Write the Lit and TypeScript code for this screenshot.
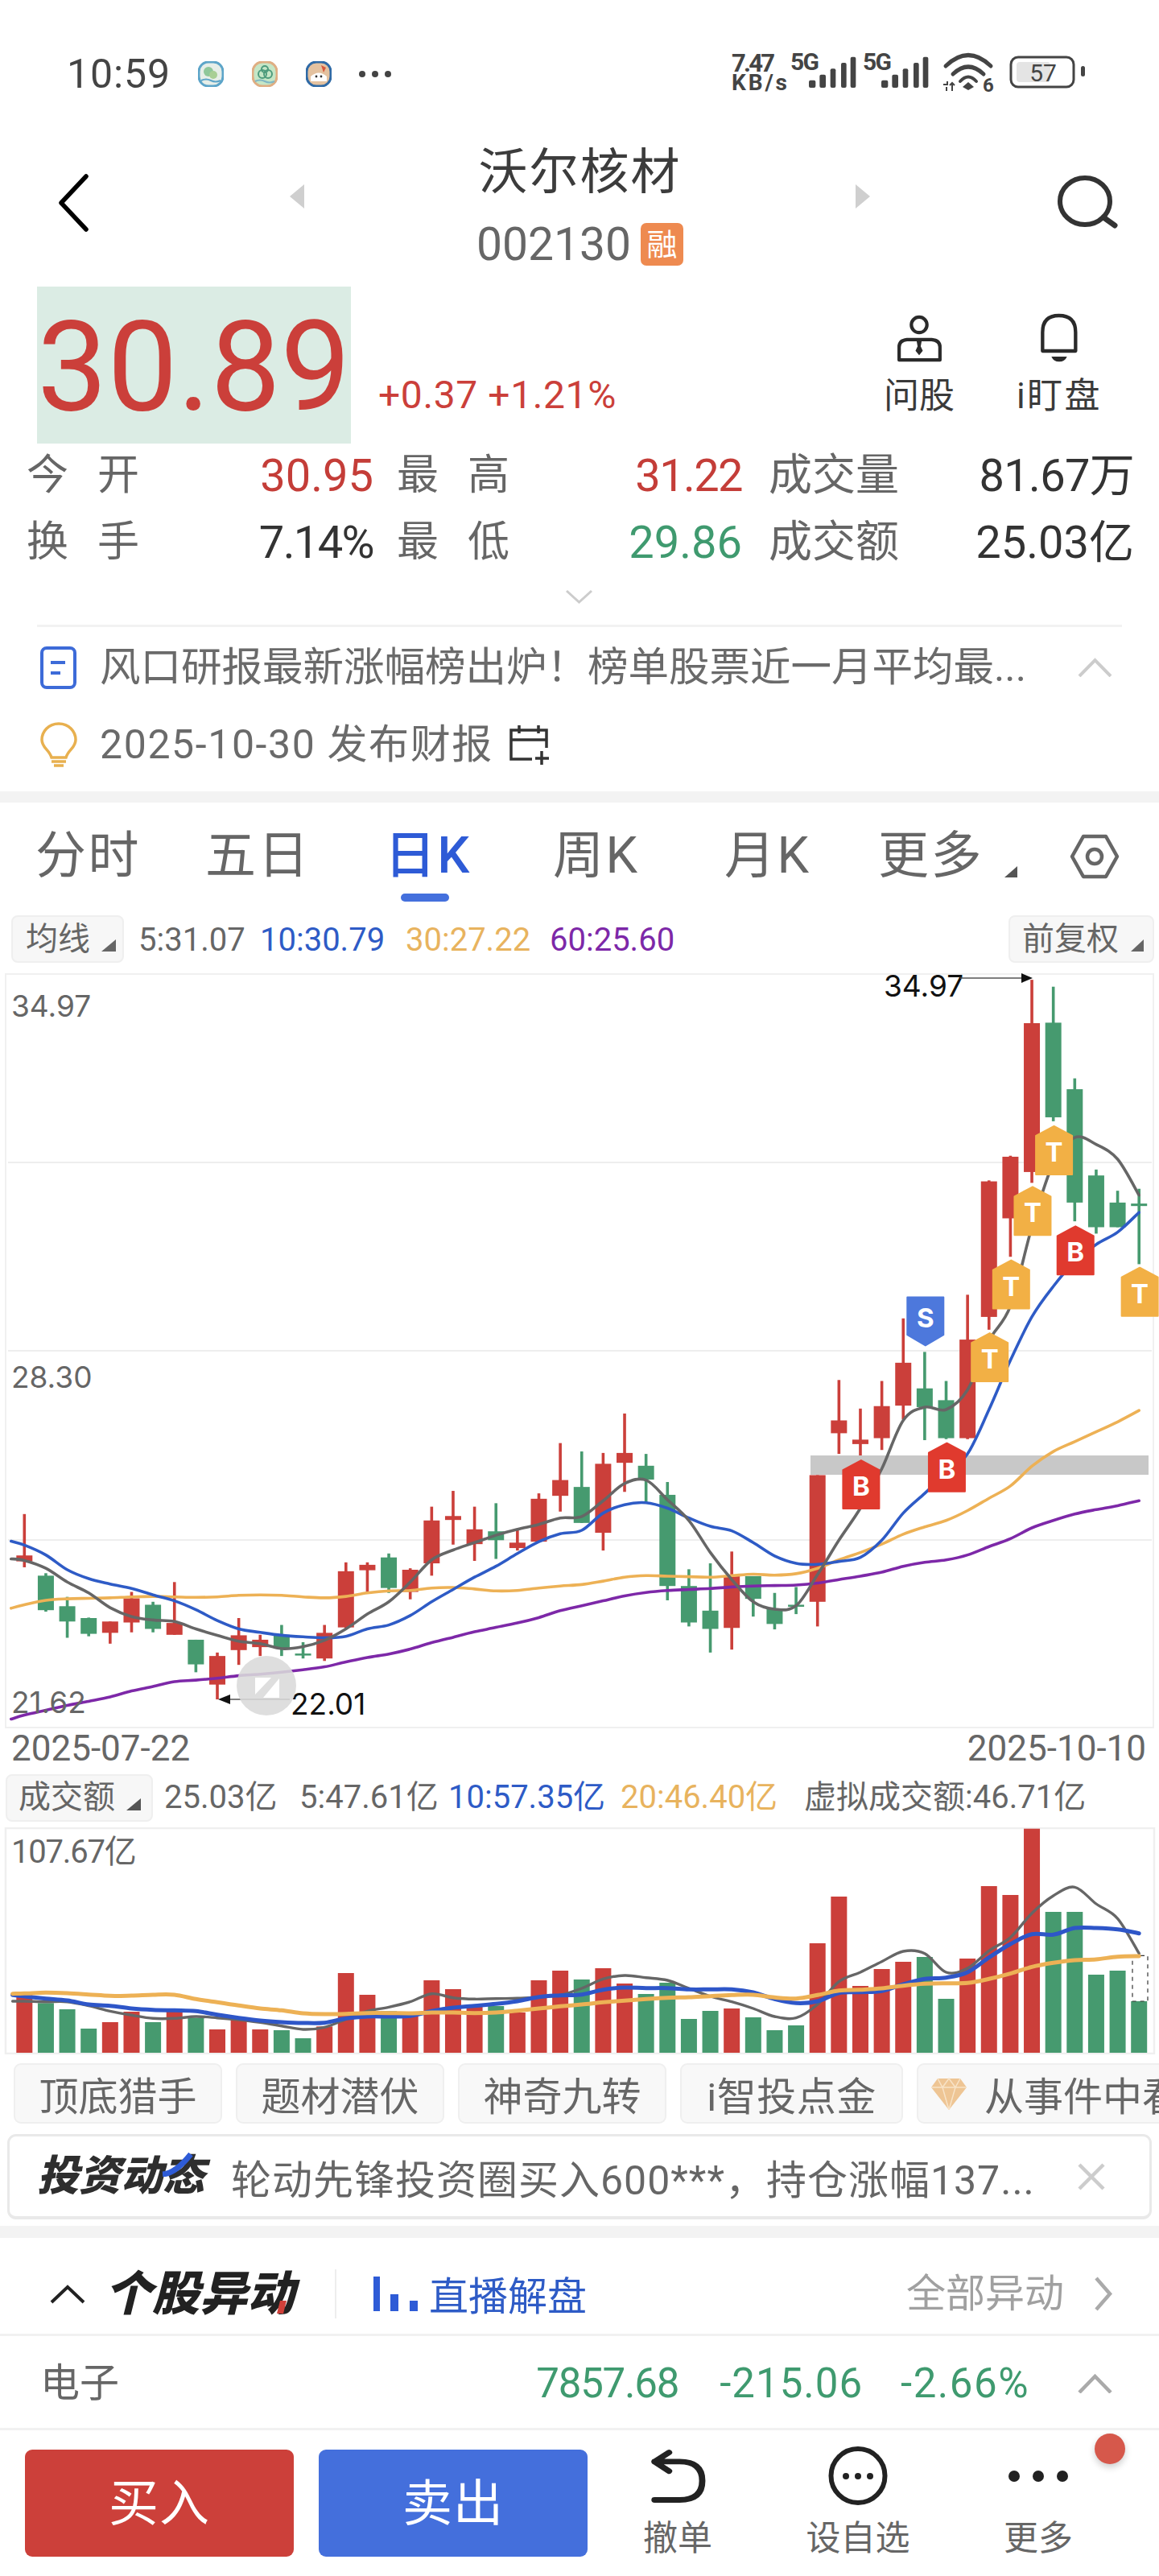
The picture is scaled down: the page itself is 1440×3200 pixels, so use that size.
import { LitElement, html, css, svg } from "lit";
import { customElement } from "lit/decorators.js";

const RED = "#cb3f3a";
const GREEN = "#469a6f";
const Z = 1568 / 720;
const STEP = 58 / Z;
const cx = (i: number) => 66 / Z + i * STEP;
const py = (z: number) => 1200 + (z * 960) / 1568;

// [isRed, wickTop, bodyTop, bodyBottom, wickBottom] in crop units
const candles: number[][] = [
  [1,1112,1196,1208,1220],[0,1232,1237,1307,1310],[0,1280,1299,1330,1363],[0,1322,1323,1355,1360],
  [1,1330,1330,1353,1375],[1,1270,1283,1332,1352],[0,1290,1296,1345,1352],[1,1250,1333,1357,1357],
  [0,1367,1367,1417,1433],[1,1393,1400,1458,1488],[1,1323,1358,1388,1418],[1,1357,1367,1382,1400],
  [0,1337,1357,1385,1400],[0,1372,1395,1399,1405],[1,1337,1353,1405,1410],[1,1210,1228,1342,1345],
  [1,1210,1215,1226,1270],[0,1192,1200,1262,1272],[1,1222,1225,1270,1285],[1,1097,1125,1212,1237],
  [1,1065,1116,1124,1174],[1,1097,1143,1173,1207],[0,1090,1147,1165,1203],[1,1142,1170,1181,1186],
  [1,1070,1081,1168,1168],[1,968,1043,1075,1107],[0,985,1057,1130,1130],[1,988,1010,1150,1186],
  [1,908,988,1008,1067],[0,990,1014,1042,1090],[0,1047,1073,1258,1287],[0,1224,1258,1332,1340],
  [0,1212,1308,1345,1393],[1,1188,1238,1343,1387],[0,1238,1238,1284,1320],[0,1272,1305,1335,1346],
  [0,1260,1296,1300,1315],[1,1033,1033,1290,1340],[1,840,922,948,990],[1,898,961,970,1000],
  [1,842,893,958,982],[1,715,805,892,920],[0,783,857,895,962],[0,842,881,958,960],
  [1,667,758,958,960],[1,435,437,712,738],[1,385,387,512,590],[1,28,116,418,440],
  [0,42,115,307,315],[0,228,250,480,518],[0,413,425,530,543],[0,456,480,530,530],[0,452,482,487,605],
];

const ma5 = [1203,1206,1222,1250,1272,1302,1320,1327,1330,1345,1358,1370,1375,1385,1381,1368,1345,1315,1290,1250,1205,1185,1170,1155,1143,1133,1120,1117,1085,1050,1043,1083,1125,1190,1245,1290,1305,1298,1235,1165,1100,1020,922,895,900,860,760,690,530,400,348,362,392,465];
const ma10 = [1167,1175,1195,1225,1243,1254,1263,1276,1288,1306,1328,1345,1352,1358,1361,1363,1360,1345,1337,1318,1290,1265,1240,1218,1192,1168,1152,1145,1110,1093,1089,1100,1120,1137,1146,1170,1197,1212,1214,1208,1200,1165,1110,1070,1030,990,900,800,712,650,600,565,540,500];
const ma30 = [1303,1296,1287,1284,1283,1282,1280,1279,1280,1281,1280,1277,1276,1277,1280,1282,1279,1272,1268,1267,1262,1261,1264,1268,1267,1262,1258,1255,1248,1240,1237,1238,1239,1240,1237,1234,1236,1233,1222,1205,1190,1173,1153,1138,1125,1105,1080,1055,1015,985,965,945,925,902];
const ma60 = [1528,1520,1510,1500,1492,1483,1471,1462,1452,1449,1445,1440,1437,1433,1428,1422,1412,1403,1396,1386,1373,1362,1351,1342,1333,1322,1308,1298,1288,1278,1271,1267,1265,1263,1260,1258,1257,1256,1252,1245,1238,1230,1218,1210,1205,1195,1178,1162,1140,1125,1112,1103,1095,1085];

// volume: [isRed, top] in crop units
const vols: number[][] = [
  [1,895],[0,925],[0,948],[0,1020],[1,996],[1,957],[0,996],[1,957],[0,980],[1,1023],[1,985],[1,1023],[0,1026],[0,1056],
  [1,1012],[1,813],[1,894],[0,955],[1,972],[1,840],[1,873],[1,935],[0,936],[1,960],[1,840],[1,804],[0,837],[1,795],
  [1,852],[0,891],[0,849],[0,984],[0,954],[1,945],[0,978],[0,1026],[0,1008],[1,702],[1,528],[1,861],[1,798],[1,771],
  [0,753],[0,909],[1,759],[1,489],[1,522],[1,275],[0,585],[0,585],[0,819],[0,804],[0,918],
];
const vGray = [918,918,920,920,935,955,970,982,982,975,980,987,997,1010,1023,1015,985,955,940,920,890,905,910,908,907,902,895,870,835,822,830,840,870,900,920,945,975,980,930,845,810,770,732,740,810,795,730,680,590,525,493,555,610,740];
const vBlue = [895,900,908,915,930,935,945,950,952,955,968,980,990,996,999,998,982,975,975,973,955,942,935,928,918,902,896,893,875,867,869,869,874,874,874,885,910,925,918,887,884,880,855,835,830,810,755,705,668,670,645,645,650,665];
const vOrange = [890,889,886,888,893,898,897,894,894,910,922,934,945,952,963,966,965,962,962,963,960,960,962,960,953,945,937,930,922,916,910,905,903,899,895,894,904,908,895,878,875,870,860,853,851,850,835,815,790,775,765,762,752,750];
const vy = (z: number) => 2180 + z / 3;

function smooth(pts: number[][]): string {
  let d = `M${pts[0][0].toFixed(1)} ${pts[0][1].toFixed(1)}`;
  for (let i = 0; i < pts.length - 1; i++) {
    const p0 = pts[Math.max(0, i - 1)];
    const p1 = pts[i];
    const p2 = pts[i + 1];
    const p3 = pts[Math.min(pts.length - 1, i + 2)];
    const c1x = p1[0] + (p2[0] - p0[0]) / 6;
    const c1y = p1[1] + (p2[1] - p0[1]) / 6;
    const c2x = p2[0] - (p3[0] - p1[0]) / 6;
    const c2y = p2[1] - (p3[1] - p1[1]) / 6;
    d += ` C${c1x.toFixed(1)} ${c1y.toFixed(1)} ${c2x.toFixed(1)} ${c2y.toFixed(1)} ${p2[0].toFixed(1)} ${p2[1].toFixed(1)}`;
  }
  return d;
}
const priceLine = (a: number[]) =>
  smooth(a.map((v, i) => [i === 0 ? 13.8 : cx(i - 1), py(v)]));
const volLine = (a: number[]) =>
  smooth(a.map((v, i) => [i === 0 ? 15.6 : cx(i - 1), vy(v)]));

function marker(zx: number, zTop: number, label: string, fill: string, down = false) {
  const x = 720 + zx / Z;
  const top = py(zTop);
  const w = 45;
  const h = 60;
  const l = x - w / 2;
  const r = x + w / 2;
  const pts = down
    ? `${l},${top} ${r},${top} ${r},${top + h * 0.78} ${x},${top + h} ${l},${top + h * 0.78}`
    : `${x},${top} ${r},${top + h * 0.2} ${r},${top + h} ${l},${top + h} ${l},${top + h * 0.2}`;
  return svg`<polygon points=${pts} fill=${fill} stroke=${fill} stroke-width="2" stroke-linejoin="round"/>
    <text x=${x} y=${top + (down ? 38 : 44)} text-anchor="middle" class="mk">${label}</text>`;
}

@customElement("app-root")
export class AppRoot extends LitElement {
  static styles = css`
    :host {
      display: block;
      width: 1440px;
      height: 3200px;
      overflow: hidden;
      background: #fff;
      font-family: Roboto, "Noto Sans CJK SC", sans-serif;
      color: #666;
    }
    svg { display: block; }
    .status { height: 184px; display: flex; align-items: center; padding-left: 83px; color: #444; }
    .time { font-size: 50px; width: 163px; letter-spacing: 0.9px; }
    .appicon { width: 32px; height: 32px; margin-right: 35px; }
    .sdots { width: 42px; height: 10px; margin-left: -2px; }
    .sright { margin-left: auto; margin-right: 60px; }
    .sright text { font-family: Roboto, sans-serif; fill: #444; }
    .nav { height: 172px; display: grid; grid-template-columns: 360px 18px 1fr 18px 359px; align-items: start; color: #444; }
    .back { margin: 32px 0 0 72px; }
    .tri { margin-top: 45px; }
    .search { margin: 34px 0 0 232px; }
    .head { display: flex; flex-direction: column; align-items: center; }
    .title { font-size: 61px; line-height: 60px; letter-spacing: 2px; color: #3c3c3c; }
    .coderow { display: flex; align-items: center; margin-top: 33px; height: 53px; }
    .code { font-size: 57px; color: #666; line-height: 53px; }
    .badge { margin-left: 12px; width: 53px; height: 53px; background: #ee8a50; color: #fff; border-radius: 7px; font-size: 38px; display: flex; align-items: center; justify-content: center; line-height: 1; }
    .quote { height: 195px; display: flex; align-items: flex-end; }
    .pricebox { margin-left: 46px; width: 390px; height: 195px; background: #dbece4; color: #cb3f3a; font-size: 155px; line-height: 200px; text-align: center; box-sizing: border-box; white-space: nowrap; }
    .chg { margin: 0 0 35px 34px; font-size: 48px; line-height: 50px; color: #cb3f3a; letter-spacing: 0.6px; white-space: nowrap; }
    .acts { margin-left: auto; margin-right: 37px; display: flex; align-self: flex-start; }
    .act { width: 174px; display: flex; flex-direction: column; align-items: center; padding-top: 33px; color: #3a3a3a; font-size: 44px; line-height: 48px; }
    .act svg { height: 62px; margin-bottom: 17px; }
    .act .sp { letter-spacing: 2.5px; }
    .stats { margin-top: 8px; display: flex; flex-direction: column; gap: 19px; }
    .srow { height: 64px; display: flex; font-size: 56px; line-height: 64px; }
    .cell { display: flex; justify-content: space-between; white-space: nowrap; }
    .c1 { margin-left: 33px; width: 431px; }
    .c2 { margin-left: 29px; width: 429px; }
    .c3 { margin-left: 33px; width: 454px; }
    .lab { font-size: 54px; color: #666; }
    .lab2 { font-size: 52px; color: #666; width: 140px; display: flex; justify-content: space-between; }
    .r { color: #c43d38; }
    .g { color: #3f9a6f; }
    .k { color: #333; }
    .nar { letter-spacing: -1.6px; }
    .nar2 { letter-spacing: -0.7px; }
    .more { margin: 26px 0 0 702px; }
    .rule { margin: 26px 46px 0; height: 3px; background: #f2f2f2; }
    .news { height: 60px; display: flex; align-items: center; padding-left: 50px; font-size: 50.5px; line-height: 60px; color: #6a6a6a; white-space: nowrap; }
    .news .t { margin-left: 29px; }
    .n1 { margin-top: 20px; }
    .n2 { margin-top: 36px; }
    .n1 .up { margin-left: auto; margin-right: 58px; }
    .n2 { font-size: 50px; }
    .n2 .cal { margin-left: 18px; }
    .n2 .t { margin-left: 28px; letter-spacing: 1.6px; }
    .band { height: 14px; background: #f3f3f3; }
    .b1 { margin-top: 28px; }
    .b2 { margin-top: 8px; height: 15px; }
    .tabs { height: 104px; padding-top: 36px; display: grid; grid-template-columns: 255px 223px 209px 213px 191px 1fr; font-size: 63px; line-height: 60px; color: #666; letter-spacing: 2.5px; }
    .tab { position: relative; white-space: nowrap; }
    .tab:first-child { padding-left: 44px; }
    .tab.on { color: #2e5bd6; font-weight: 500; }
    .tab.on::after { content: ""; position: absolute; left: 20px; top: 77px; width: 60px; height: 10px; border-radius: 5px; background: #4470dd; }
    .tab.m { display: flex; align-items: flex-start; }
    .tab.m .tr { margin: 43px 0 0 26px; flex: none; }
    .tab.m .hex { margin: 3px 0 0 65px; flex: none; }
    .ind { height: 59px; display: flex; align-items: center; font-size: 40px; line-height: 48px; white-space: nowrap; }
    .btn { box-sizing: border-box; height: 59px; display: flex; align-items: center; background: #f7f7f7; border: 2px solid #efefef; border-radius: 8px; color: #666; font-size: 40px; }
    .btn svg { margin-top: 16px; }
    .b-ma { margin-left: 14px; width: 140px; padding-left: 16px; gap: 14px; }
    .b-fq { margin-left: auto; margin-right: 6px; width: 181px; padding-left: 15px; gap: 15px; }
    .b-vol { margin-left: 7px; width: 183px; padding-left: 14px; gap: 14px; }
    .vals { display: flex; margin-left: 18px; padding-top: 3px; }
    .vals span { display: block; }
    .ma5 { color: #666; width: 151px; }
    .ma10 { color: #2e5bc6; width: 181px; }
    .ma30 { color: #e8b35e; width: 179px; }
    .ma60 { color: #7d28a8; }
    .chart { margin-top: 13px; overflow: visible; }
    .chart text { font-family: Inter, sans-serif; font-size: 37px; }
    .chart .gl { fill: #666; }
    .chart .bl { fill: #111; }
    .chart .mk { font-size: 33px; font-weight: 700; fill: #fff; }
    .dates { height: 56px; display: flex; justify-content: space-between; padding: 0 16px 0 14px; font-size: 44px; line-height: 50px; color: #666; }
    .vrow { height: 60px; }
    .v0 { width: 168px; margin-left: 14px; color: #666; }
    .v1 { width: 185px; color: #666; }
    .v2 { width: 214px; color: #2e5bc6; }
    .v3 { width: 228px; color: #e8b35e; }
    .v4 { color: #666; }
    .volc { margin-top: 7px; }
    .volc text { font-family: Roboto, "Noto Sans CJK SC", sans-serif; font-size: 40px; fill: #666; letter-spacing: -1.2px; }
    .pills { margin: 11px 0 0 17px; height: 75px; display: flex; gap: 17px; overflow: hidden; white-space: nowrap; }
    .pill { box-sizing: border-box; flex: none; height: 75px; display: flex; align-items: center; justify-content: center; background: #f8f8f8; border: 2px solid #efefef; border-radius: 9px; font-size: 49px; color: #666; }
    .p4 { width: 259px; }
    .p5 { width: 277px; letter-spacing: 0.5px; }
    .p-gem { width: 400px; justify-content: flex-start; padding-left: 16px; gap: 22px; }
    .banner { box-sizing: border-box; margin: 13px 9px 0; height: 106px; border: 3px solid #e9e9e9; border-bottom-width: 4px; border-radius: 11px; display: flex; align-items: center; padding-left: 36px; white-space: nowrap; font-size: 50px; color: #666; }
    .logo { position: relative; font-size: 52px; font-weight: 900; font-style: italic; color: #2e2e2e; line-height: 60px; margin-left: -2px; }
    .slash { position: absolute; left: 154px; top: 0; }
    .banner .t { margin-left: 33px; letter-spacing: 1px; }
    .banner .x { margin-left: auto; margin-right: 55px; }
    .sec { height: 99px; padding-top: 20px; display: flex; align-items: center; border-bottom: 3px solid #f1f1f1; white-space: nowrap; }
    .sec .cv { margin-left: 62px; }
    .stitle { position: relative; margin-left: 24px; font-size: 59px; font-weight: 900; font-style: italic; color: #222; line-height: 60px; }
    .stitle i { position: absolute; left: 216px; top: 38px; width: 8px; height: 16px; background: #d0403a; transform: skewX(-14deg); }
    .vline { width: 2px; height: 61px; background: #eee; margin-left: 50px; }
    .bars { margin-left: 46px; }
    .live { margin-left: 14px; font-size: 49px; color: #2e5bc6; line-height: 60px; padding-top: 8px; }
    .all { margin-left: auto; font-size: 49px; color: #a0a0a0; line-height: 60px; }
    .sec .go { margin: 0 58px 0 37px; }
    .row { height: 110px; padding-top: 4px; display: flex; align-items: center; border-bottom: 3px solid #f1f1f1; font-size: 49px; line-height: 60px; }
    .row .nm { margin-left: 50px; }
    .row .g { font-size: 51px; }
    .rv1 { margin-left: auto; letter-spacing: -1.2px; }
    .rv2 { margin-left: 51px; letter-spacing: 1px; }
    .rv3 { margin-left: 47px; letter-spacing: 1.5px; }
    .row .up { margin: 0 58px 0 60px; }
    .bar { position: relative; height: 179px; padding: 24px 0 0 31px; box-sizing: border-box; display: flex; align-items: flex-start; }
    .trade { width: 334px; height: 133px; border-radius: 9px; color: #fff; font-size: 62px; line-height: 136px; text-align: center; letter-spacing: 1px; }
    .buy { background: #cc403a; }
    .sell { background: #446fdc; margin-left: 31px; }
    .tool { width: 224px; height: 140px; margin-top: -5px; display: flex; flex-direction: column; align-items: center; justify-content: flex-start; font-size: 43px; color: #666; line-height: 44px; white-space: nowrap; }
    .tool .ic { height: 75px; margin-bottom: 18px; display: flex; align-items: center; }
    .dot { position: absolute; left: 1360px; top: 4px; width: 38px; height: 38px; border-radius: 50%; background: #d6584b; box-shadow: 0 4px 8px rgba(0,0,0,.2); }
  `;

  private appIcon(ring: string, inner: string, body: unknown) {
    return html`<svg class="appicon" viewBox="0 0 32 32">
      <rect x="1" y="1" width="30" height="30" rx="12" fill=${inner} stroke=${ring} stroke-width="3"/>
      ${body}
    </svg>`;
  }

  private chartSvg() {
    return html`<svg class="chart" width="1440" height="938" viewBox="0 1209 1440 938">
      <rect x="7" y="1210" width="1426" height="936" fill="none" stroke="#f0f0f0" stroke-width="2"/>
      ${[1444, 1678, 1913].map((y) => svg`<line x1="10" x2="1431" y1=${y} y2=${y} stroke="#e9e9e9" stroke-width="1.5"/>`)}
      ${candles.map((c, i) => {
        const x = cx(i);
        const col = c[0] ? RED : GREEN;
        return svg`<rect x=${x - 1.8} y=${py(c[1])} width="3.6" height=${py(c[4]) - py(c[1])} fill=${col}/>
          <rect x=${x - 10} y=${py(c[2])} width="20" height=${Math.max(py(c[3]) - py(c[2]), 2.5)} fill=${col}/>`;
      })}
      <rect x="1007" y="1808" width="420" height="24" fill="#c8c8c8"/>
      <g fill="none" stroke-linecap="round">
        <path d=${priceLine(ma60)} stroke="#7d28a8" stroke-width="3.6"/>
        <path d=${priceLine(ma30)} stroke="#edb155" stroke-width="3.6"/>
        <path d=${priceLine(ma10)} stroke="#2e5bc6" stroke-width="3.6"/>
        <path d=${priceLine(ma5)} stroke="#666" stroke-width="3.6"/>
      </g>
      ${marker(762, 1003, "B", "#e03a2e")}
      ${marker(994, 968, "B", "#e03a2e")}
      ${marker(1342, 528, "B", "#e03a2e")}
      ${marker(936, 672, "S", "#4d78dc", true)}
      ${marker(1110, 745, "T", "#f2b045")}
      ${marker(1168, 597, "T", "#f2b045")}
      ${marker(1226, 448, "T", "#f2b045")}
      ${marker(1284, 325, "T", "#f2b045")}
      ${marker(1516, 612, "T", "#f2b045")}
      <text x="14" y="1263" class="gl">34.97</text>
      <text x="14" y="1724" class="gl">28.30</text>
      <text x="14" y="2128" class="gl">21.62</text>
      <text x="361" y="2130" class="bl">22.01</text>
      <text x="1098" y="1238" class="bl">34.97</text>
      <line x1="1193" x2="1272" y1="1215" y2="1215" stroke="#555" stroke-width="1.5"/>
      <polygon points="1269,1209 1283,1215 1269,1221" fill="#111"/>
      <line x1="280" x2="360" y1="2111" y2="2111" stroke="#555" stroke-width="1.5"/>
      <polygon points="271,2111 286,2105 286,2117" fill="#111"/>
      <circle cx="331" cy="2094" r="37" fill="#d9d9d9" fill-opacity="0.88"/>
      <path d="M317 2084 H337 L317 2105 Z M347 2085 V2109 H327 Z" fill="#fff"/>
    </svg>`;
  }

  private volSvg() {
    return html`<svg class="volc" width="1440" height="282" viewBox="0 2270 1440 282">
      <rect x="7" y="2271" width="1427" height="280" fill="none" stroke="#efefef" stroke-width="2.5"/>
      ${vols.map((v, i) => svg`<rect x=${cx(i) - 10} y=${vy(v[1])} width="20" height=${2550 - vy(v[1])} fill=${v[0] ? RED : GREEN}/>`)}
      <rect x="1407" y=${vy(748)} width="19" height=${vy(918) - vy(748)} fill="#fff" stroke="#333" stroke-width="1.2" stroke-dasharray="5 5"/>
      <g fill="none" stroke-linecap="round">
        <path d=${volLine(vGray)} stroke="#666" stroke-width="3.4"/>
        <path d=${volLine(vBlue)} stroke="#2e56c8" stroke-width="5"/>
        <path d=${volLine(vOrange)} stroke="#edb155" stroke-width="5"/>
      </g>
      <text x="14" y="2314">107.67亿</text>
    </svg>`;
  }

  private statusRight() {
    const bars = (ox: number) =>
      [[375, 400, 158], [415, 438, 137], [455, 475, 115], [495, 515, 93], [530, 550, 71]].map(
        (b) => svg`<rect x=${880 + (b[0] + ox) / 3} y=${50 + b[2] / 3} width=${(b[1] - b[0]) / 3} height=${(186 - b[2]) / 3} rx="2" fill="#444"/>`
      );
    return html`<svg class="sright" width="500" height="90" viewBox="880 50 500 90">
      <text x="909" y="92" font-size="31" font-weight="700" textLength="54">7.47</text>
      <text x="909" y="115" font-size="28" font-weight="700" textLength="69">KB/s</text>
      <text x="982" y="90" font-size="30" font-weight="700" textLength="36">5G</text>
      ${bars(0)}
      <text x="1072" y="90" font-size="30" font-weight="700" textLength="36">5G</text>
      ${bars(270)}
      <g fill="none" stroke="#444" stroke-linecap="round" stroke-width="5">
        <path d="M1175 85 Q1203 58 1231 85"/>
        <path d="M1184 95 Q1203 77 1222 95"/>
        <path d="M1193 104 Q1203 93 1213 104" stroke-width="4"/>
      </g>
      <polygon points="1203,105 1210,111 1203,115 1196,111" fill="#444"/>
      <path d="M1172 108 h5 v-4 M1176 111 v5 M1183 116 v-10 m-3 3 l3 -3 l3 3" fill="none" stroke="#444" stroke-width="2"/>
      <text x="1221" y="117" font-size="24" font-weight="700">6</text>
      <rect x="1256" y="74" width="78" height="37" rx="9" fill="none" stroke="#444" stroke-width="3"/>
      <rect x="1263" y="80" width="42" height="25" rx="4" fill="#e4e4e4"/>
      <text x="1296" y="104" font-size="30" text-anchor="middle">57</text>
      <rect x="1343" y="85" width="5" height="13" rx="2.5" fill="#444"/>
    </svg>`;
  }

  render() {
    return html`
      <div class="status" lang="zh-CN">
        <span class="time">10:59</span>
        ${this.appIcon("#5da5c9", "#e6eee8", svg`<circle cx="13" cy="13" r="6" fill="#8fc79a"/><circle cx="19" cy="17" r="5" fill="#a8cf95"/><path d="M4 24 q6 -3 12 0 t12 0" stroke="#5da5c9" stroke-width="2" fill="none"/>`)}
        ${this.appIcon("#dfae83", "#c5e6c6", svg`<circle cx="13" cy="16" r="5" fill="none" stroke="#4d9b7c" stroke-width="2"/><circle cx="20" cy="16" r="5" fill="none" stroke="#4d9b7c" stroke-width="2"/><circle cx="16" cy="10" r="4" fill="none" stroke="#4d9b7c" stroke-width="2"/><path d="M4 25 q6 -3 12 0 t12 0" stroke="#7fb7c4" stroke-width="2" fill="none"/>`)}
        ${this.appIcon("#2f6aa6", "#e4c2a0", svg`<path d="M6 19 q10 -9 20 0 v6 h-20z" fill="#fff"/><circle cx="13" cy="19" r="1.4" fill="#333"/><circle cx="19" cy="19" r="1.4" fill="#333"/><path d="M19 5 l6 3 l-3 6z" fill="#d9583a"/>`)}
        <svg class="sdots" viewBox="0 0 42 10"><circle cx="5" cy="5" r="4" fill="#444"/><circle cx="21" cy="5" r="4" fill="#444"/><circle cx="37" cy="5" r="4" fill="#444"/></svg>
        ${this.statusRight()}
      </div>

      <div class="nav" lang="zh-CN">
        <svg class="back" width="38" height="72" viewBox="0 0 38 72"><path d="M35 3 L4 36 L35 69" fill="none" stroke="#000" stroke-width="5.5" stroke-linecap="round" stroke-linejoin="round"/></svg>
        <svg class="tri" width="18" height="30" viewBox="0 0 18 30"><path d="M18 0 V30 L0 15Z" fill="#cfcfcf"/></svg>
        <div class="head">
          <div class="title">沃尔核材</div>
          <div class="coderow"><span class="code">002130</span><span class="badge">融</span></div>
        </div>
        <svg class="tri" width="18" height="30" viewBox="0 0 18 30"><path d="M0 0 V30 L18 15Z" fill="#cfcfcf"/></svg>
        <svg class="search" width="76" height="68" viewBox="0 0 76 68"><ellipse cx="35" cy="32" rx="31" ry="29" fill="none" stroke="#333" stroke-width="6"/><path d="M58 52 L72 62" stroke="#333" stroke-width="7" stroke-linecap="round"/></svg>
      </div>

      <div class="quote" lang="zh-CN">
        <div class="pricebox">30.89</div>
        <div class="chg">+0.37 +1.21%</div>
        <div class="acts">
          <div class="act">
            <svg width="60" height="62" viewBox="62 20 180 192"><circle cx="152" cy="65" r="30" fill="none" stroke="#2a2a2a" stroke-width="13"/><path d="M75 200 V150 Q75 125 105 122 H200 Q232 125 232 150 V200 Z" fill="none" stroke="#2a2a2a" stroke-width="13" stroke-linejoin="round"/><path d="M142 125 H162 L158 148 L166 165 L152 182 L138 165 L146 148Z" fill="#2a2a2a"/></svg>
            <span>问股</span>
          </div>
          <div class="act">
            <svg width="46" height="62" viewBox="605 26 138 182"><path d="M612 165 V95 Q612 33 673 33 Q735 33 735 95 V165 Z" fill="none" stroke="#2a2a2a" stroke-width="13" stroke-linejoin="round"/><path d="M645 186 H703 Q695 205 674 205 Q653 205 645 186Z" fill="#2a2a2a"/></svg>
            <span class="sp">i盯盘</span>
          </div>
        </div>
      </div>

      <div class="stats" lang="zh-CN">
        <div class="srow">
          <div class="cell c1"><span class="lab2"><span>今</span><span>开</span></span><span class="r">30.95</span></div>
          <div class="cell c2"><span class="lab2"><span>最</span><span>高</span></span><span class="r nar">31.22</span></div>
          <div class="cell c3"><span class="lab">成交量</span><span class="k nar2">81.67万</span></div>
        </div>
        <div class="srow">
          <div class="cell c1"><span class="lab2"><span>换</span><span>手</span></span><span class="k nar">7.14%</span></div>
          <div class="cell c2"><span class="lab2"><span>最</span><span>低</span></span><span class="g">29.86</span></div>
          <div class="cell c3"><span class="lab">成交额</span><span class="k">25.03亿</span></div>
        </div>
      </div>

      <svg class="more" width="35" height="18" viewBox="0 0 35 18"><path d="M2 2 L17.5 16 L33 2" fill="none" stroke="#ccc" stroke-width="3"/></svg>
      <div class="rule"></div>

      <div class="news n1" lang="zh-CN">
        <svg width="45" height="53" viewBox="0 0 45 53"><rect x="2" y="2" width="41" height="49" rx="6" fill="none" stroke="#3d6bd8" stroke-width="4"/><path d="M13 20 H31 M13 33 H25" stroke="#3d6bd8" stroke-width="4"/></svg>
        <span class="t">风口研报最新涨幅榜出炉！榜单股票近一月平均最...</span>
        <svg class="up" width="43" height="24" viewBox="0 0 43 24"><path d="M2 23 L21.5 3 L41 23" fill="none" stroke="#ccc" stroke-width="4"/></svg>
      </div>
      <div class="news n2" lang="zh-CN">
        <svg width="46" height="56" viewBox="0 0 46 56"><path d="M23 2 C10 2 2 12 2 22 C2 32 11 34 14 44 H32 C35 34 44 32 44 22 C44 12 36 2 23 2Z" fill="none" stroke="#e8b04f" stroke-width="3.5"/><path d="M14 49 H32 M17 54 H29" stroke="#e8b04f" stroke-width="3.5"/></svg>
        <span class="t">2025-10-30 发布财报</span>
        <svg class="cal" width="52" height="52" viewBox="0 0 52 52"><path d="M30 44 H4 V8 H48 V30 M4 20 H48 M14 2 V12 M38 2 V12 M42 34 V51 M34 43 H51" fill="none" stroke="#333" stroke-width="3.5"/></svg>
      </div>
      <div class="band b1"></div>

      <div class="tabs" lang="zh-CN">
        <div class="tab">分时</div>
        <div class="tab">五日</div>
        <div class="tab on">日K</div>
        <div class="tab">周K</div>
        <div class="tab">月K</div>
        <div class="tab m"><span>更多</span>
          <svg class="tr" width="16" height="14" viewBox="0 0 16 14"><path d="M16 0 V14 H0Z" fill="#555"/></svg>
          <svg class="hex" width="62" height="56" viewBox="0 0 62 56"><path d="M17 3 H45 L59 28 L45 53 H17 L3 28Z" fill="none" stroke="#666" stroke-width="4.5" stroke-linejoin="round"/><circle cx="31" cy="28" r="9" fill="none" stroke="#666" stroke-width="4.5"/></svg>
        </div>
      </div>

      <div class="ind" lang="zh-CN">
        <div class="btn b-ma">均线<svg width="18" height="15" viewBox="0 0 18 15"><path d="M18 0 V15 H0Z" fill="#666"/></svg></div>
        <div class="vals">
          <span class="ma5">5:31.07</span><span class="ma10">10:30.79</span><span class="ma30">30:27.22</span><span class="ma60">60:25.60</span>
        </div>
        <div class="btn b-fq">前复权<svg width="16" height="15" viewBox="0 0 16 15"><path d="M16 0 V15 H0Z" fill="#666"/></svg></div>
      </div>

      ${this.chartSvg()}

      <div class="dates"><span>2025-07-22</span><span>2025-10-10</span></div>

      <div class="ind vrow" lang="zh-CN">
        <div class="btn b-vol">成交额<svg width="18" height="15" viewBox="0 0 18 15"><path d="M18 0 V15 H0Z" fill="#555"/></svg></div>
        <span class="v0">25.03亿</span><span class="v1">5:47.61亿</span><span class="v2">10:57.35亿</span><span class="v3">20:46.40亿</span><span class="v4">虚拟成交额:46.71亿</span>
      </div>

      ${this.volSvg()}

      <div class="pills" lang="zh-CN">
        <div class="pill p4">顶底猎手</div>
        <div class="pill p4">题材潜伏</div>
        <div class="pill p4">神奇九转</div>
        <div class="pill p5">i智投点金</div>
        <div class="pill p-gem">
          <svg width="44" height="40" viewBox="0 0 44 40"><path d="M8 1 H36 L44 12 L22 40 L0 12Z" fill="#eec594"/><path d="M0 12 H44 M14 12 L22 40 L30 12 M8 1 L14 12 L22 1 L30 12 L36 1" fill="none" stroke="#f8e3c7" stroke-width="1.5"/></svg>
          <span>从事件中看</span>
        </div>
      </div>

      <div class="banner" lang="zh-CN">
        <span class="logo">投资动态
          <svg class="slash" width="40" height="30" viewBox="0 0 40 30"><path d="M2 27 Q18 26 37 2" fill="none" stroke="#2e5bd6" stroke-width="7"/></svg>
        </span>
        <span class="t">轮动先锋投资圈买入600***，持仓涨幅137...</span>
        <svg class="x" width="34" height="34" viewBox="0 0 34 34"><path d="M2 2 L32 32 M32 2 L2 32" stroke="#ccc" stroke-width="4.5"/></svg>
      </div>
      <div class="band b2"></div>

      <div class="sec" lang="zh-CN">
        <svg class="cv" width="44" height="24" viewBox="0 0 44 24"><path d="M2 22 L22 3 L42 22" fill="none" stroke="#222" stroke-width="4"/></svg>
        <span class="stitle">个股异动<i></i></span>
        <span class="vline"></span>
        <svg class="bars" width="55" height="43" viewBox="0 0 55 43"><rect x="0" y="0" width="8" height="43" fill="#2e5bd6"/><rect x="21" y="22" width="10" height="21" fill="#2e5bd6"/><rect x="45" y="30" width="10" height="13" fill="#2e5bd6"/></svg>
        <span class="live">直播解盘</span>
        <span class="all">全部异动</span>
        <svg class="go" width="23" height="43" viewBox="0 0 23 43"><path d="M3 2 L20 21.5 L3 41" fill="none" stroke="#aaa" stroke-width="4.5"/></svg>
      </div>

      <div class="row" lang="zh-CN">
        <span class="nm">电子</span>
        <span class="g rv1">7857.68</span>
        <span class="g rv2">-215.06</span>
        <span class="g rv3">-2.66%</span>
        <svg class="up" width="43" height="24" viewBox="0 0 43 24"><path d="M2 23 L21.5 3 L41 23" fill="none" stroke="#aaa" stroke-width="4.5"/></svg>
      </div>

      <div class="bar" lang="zh-CN">
        <div class="trade buy">买入</div>
        <div class="trade sell">卖出</div>
        <div class="tool">
          <div class="ic"><svg width="75" height="70" viewBox="60 120 200 215" preserveAspectRatio="none"><path d="M130 137 L82 172 L130 208 M82 172 H165 Q240 172 240 245 Q240 318 165 318 H82" fill="none" stroke="#222" stroke-width="21" stroke-linecap="round" stroke-linejoin="round"/></svg></div>
          <span>撤单</span>
        </div>
        <div class="tool">
          <div class="ic"><svg width="74" height="75" viewBox="0 0 74 75"><circle cx="37" cy="37.5" r="33.5" fill="none" stroke="#222" stroke-width="6"/><circle cx="22" cy="38" r="4" fill="#222"/><circle cx="37" cy="38" r="4" fill="#222"/><circle cx="52" cy="38" r="4" fill="#222"/></svg></div>
          <span>设自选</span>
        </div>
        <div class="tool">
          <div class="ic"><svg width="76" height="16" viewBox="0 0 76 16"><circle cx="8" cy="8" r="7" fill="#222"/><circle cx="38" cy="8" r="7" fill="#222"/><circle cx="68" cy="8" r="7" fill="#222"/></svg></div>
          <span>更多</span>
        </div>
        <div class="dot"></div>
      </div>
    `;
  }
}
